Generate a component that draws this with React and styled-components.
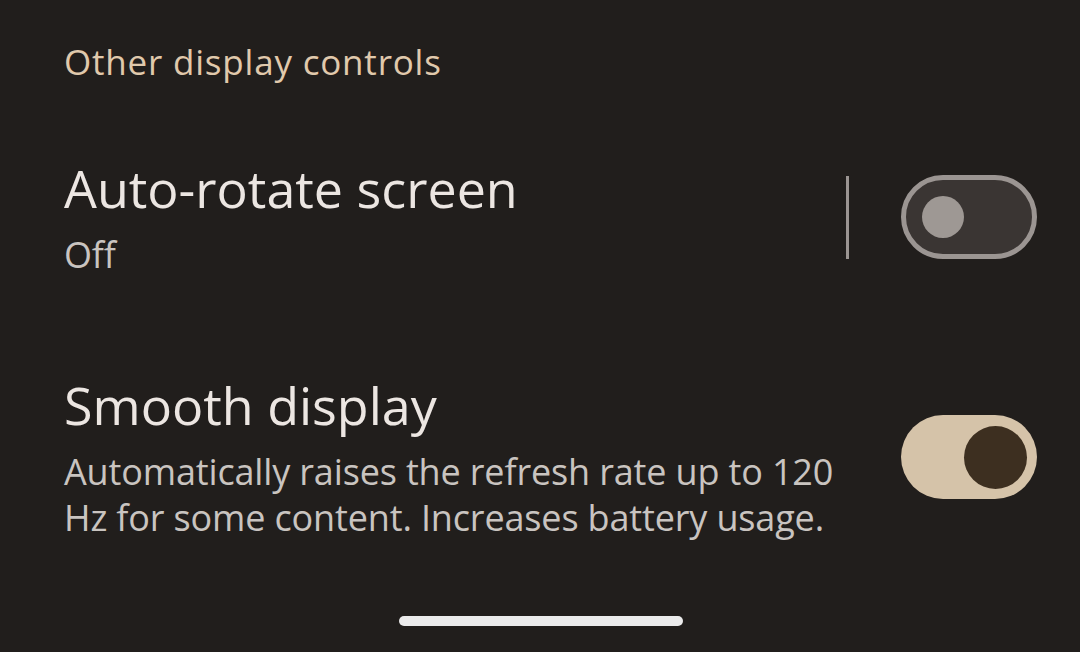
import React from 'react'
import styled, { createGlobalStyle } from 'styled-components'

const Global = createGlobalStyle`
  html, body {
    margin: 0;
    padding: 0;
    background: #211e1c;
  }
  body {
    font-family: "Open Sans", Roboto, sans-serif;
    -webkit-font-smoothing: antialiased;
  }
`

const Screen = styled.div`
  height: 652px;
  width: 1080px;
  box-sizing: border-box;
  padding: 0 43px 0 64px;
  display: flex;
  flex-direction: column;
  background: #211e1c;
  overflow: hidden;
`

const SectionTitle = styled.h2`
  margin: 38px 0 0;
  font-size: 35px;
  line-height: 48px;
  font-weight: 500;
  letter-spacing: 0.8px;
  color: #e0c9ac;
`

const Row = styled.div`
  display: flex;
  align-items: center;
  margin-top: ${p => p.$top}px;
`

const Texts = styled.div`
  flex: 1;
  display: flex;
  flex-direction: column;
  padding-right: ${p => p.$pad || 0}px;
`

const Title = styled.div`
  font-size: 52px;
  line-height: 64px;
  color: #ece6e2;
`

const Summary = styled.div`
  margin-top: 12px;
  font-size: 36px;
  line-height: 46px;
  letter-spacing: -0.15px;
  color: #c9c4c0;
`

const Divider = styled.div`
  width: 3px;
  height: 83px;
  background: #9b9592;
  margin-right: 52px;
`

const Track = styled.div`
  width: 136px;
  height: 84px;
  box-sizing: border-box;
  border-radius: 42px;
  display: flex;
  align-items: center;
  background: ${p => (p.$on ? '#d5c3a9' : '#3a3533')};
  border: ${p => (p.$on ? 'none' : '5px solid #9b9592')};
  padding: ${p => (p.$on ? '0 10px 0 0' : '0 0 0 16px')};
  justify-content: ${p => (p.$on ? 'flex-end' : 'flex-start')};
`

const Knob = styled.div`
  width: ${p => (p.$on ? 63 : 42)}px;
  height: ${p => (p.$on ? 63 : 42)}px;
  border-radius: 50%;
  background: ${p => (p.$on ? '#3d2f20' : '#9e9894')};
`

const HomeBar = styled.div`
  margin-top: auto;
  margin-bottom: 26px;
  align-self: center;
  transform: translateX(-10px);
  width: 284px;
  height: 10px;
  border-radius: 5px;
  background: #ebebeb;
`

const Toggle = ({ on }) => (
  <Track $on={on}>
    <Knob $on={on} />
  </Track>
)

export default function App() {
  return (
    <>
      <Global />
      <Screen>
        <SectionTitle>Other display controls</SectionTitle>
        <Row $top={70}>
          <Texts>
            <Title>Auto-rotate screen</Title>
            <Summary>Off</Summary>
          </Texts>
          <Divider />
          <Toggle on={false} />
        </Row>
        <Row $top={95}>
          <Texts $pad={60}>
            <Title>Smooth display</Title>
            <Summary>
              Automatically raises the refresh rate up to 120 Hz for some content. Increases battery usage.
            </Summary>
          </Texts>
          <Toggle on />
        </Row>
        <HomeBar />
      </Screen>
    </>
  )
}
